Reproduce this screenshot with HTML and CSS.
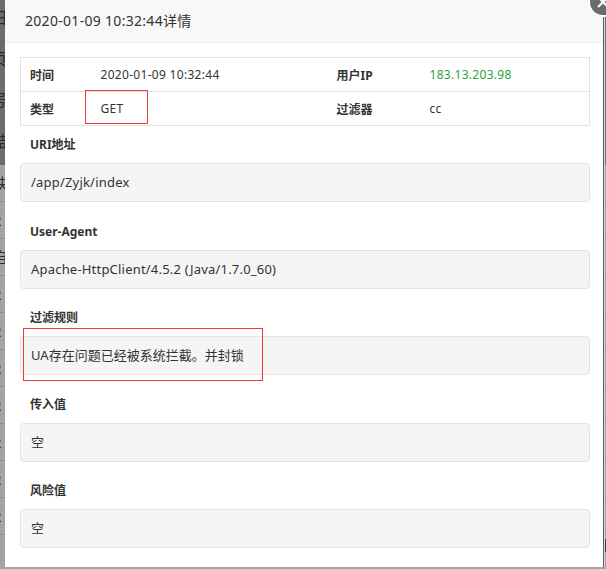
FILE: index.html
```html
<!DOCTYPE html>
<html lang="zh-CN">
<head>
<meta charset="utf-8">
<title>详情</title>
<link rel="stylesheet" href="styles.css">
</head>
<body>
<div class="page">
  <div class="page-top">
    <div class="prow">旧</div>
    <div class="prow">页</div>
    <div class="prow">号</div>
    <div class="prow">黠</div>
  </div>
  <div class="page-list">
    <div class="lrow">块</div>
    <div class="lrow">2</div>
    <div class="lrow">自</div>
    <div class="lrow">2</div>
    <div class="lrow">2</div>
    <div class="lrow">2</div>
    <div class="lrow">2</div>
    <div class="lrow">2</div>
    <div class="lrow">2</div>
    <div class="lrow">2</div>
    <div class="lrow last">2&nbsp;&nbsp;&nbsp;&nbsp;&nbsp;&nbsp;█████████&nbsp;&nbsp;&nbsp;&nbsp;&nbsp;&nbsp;&nbsp;&nbsp;&nbsp;&nbsp;████████████&nbsp;&nbsp;&nbsp;&nbsp;&nbsp;&nbsp;&nbsp;&nbsp;&nbsp;&nbsp;███&nbsp;&nbsp;&nbsp;&nbsp;&nbsp;&nbsp;&nbsp;&nbsp;&nbsp;&nbsp;&nbsp;&nbsp;&nbsp;&nbsp;&nbsp;████████████████████████</div>
  </div>
</div>

<div class="layer">
  <div class="layer-title">2020-01-09 10:32:44详情</div>
  <div class="layer-body">
    <table class="info">
      <colgroup>
        <col class="c1"><col class="c2"><col class="c3"><col class="c4">
      </colgroup>
      <tr>
        <th class="first">时间</th>
        <td>2020-01-09 10:32:44</td>
        <th>用户IP</th>
        <td class="ip">183.13.203.98</td>
      </tr>
      <tr>
        <th class="first">类型</th>
        <td>GET</td>
        <th>过滤器</th>
        <td>cc</td>
      </tr>
    </table>

    <div class="field first-field">
      <div class="label">URI地址</div>
      <div class="value latin">/app/Zyjk/index</div>
    </div>
    <div class="field">
      <div class="label">User-Agent</div>
      <div class="value latin">Apache-HttpClient/4.5.2 (Java/1.7.0_60)</div>
    </div>
    <div class="field">
      <div class="label">过滤规则</div>
      <div class="value">UA存在问题已经被系统拦截。并封锁</div>
    </div>
    <div class="field">
      <div class="label">传入值</div>
      <div class="value">空</div>
    </div>
    <div class="field">
      <div class="label">风险值</div>
      <div class="value">空</div>
    </div>
  </div>
  <span class="close"></span>
</div>

<div class="mark mark-get"></div>
<div class="mark mark-rule"></div>
</body>
</html>
```
FILE: styles.css
```css
html, body {
  margin: 0;
  padding: 0;
}
body {
  width: 606px;
  height: 569px;
  overflow: hidden;
  position: relative;
  background: #a6a6a6;
  font-family: "Noto Sans", "Noto Sans CJK SC", sans-serif;
  color: #333;
}

/* background page seen through the shade */
.page {
  width: 606px;
}
.page-top {
  background: #6d6d6d;
  height: 165px;
  padding-top: 8px;
  box-sizing: border-box;
}
.prow {
  height: 41px;
  font-size: 16px;
  line-height: 20px;
  color: #2a2a2a;
  margin-left: -9px;
}
.page-list {
  background: #a3a3a3;
}
.lrow {
  height: 36px;
  line-height: 36px;
  font-size: 15px;
  color: #2e2e2e;
  margin-left: -7px;
  border-bottom: 1px solid #8c8c8c;
  white-space: nowrap;
}
.lrow.last {
  line-height: 20px;
  height: 40px;
  font-size: 13px;
  color: #3a3a3a;
}

/* dialog */
.layer {
  position: absolute;
  left: 5px;
  top: 0;
  width: 598px;
  height: 567px;
  background: #fff;
  box-shadow: 1px 0 0 #5c5c5c, 2px 0 0 #d8d8d8;
}
.layer-title {
  height: 42px;
  line-height: 42px;
  padding-left: 20px;
  font-size: 14px;
  letter-spacing: 0.3px;
  color: #333;
  background: #f8f8f8;
  border-bottom: 1px solid #eee;
}
.layer-body {
  padding: 14px 13px 0 15px;
}

.info {
  width: 570px;
  border-collapse: collapse;
  border: 1px solid #e2e2e2;
  font-size: 12px;
}
.c1 { width: 65px; }
.c2 { width: 236px; }
.c3 { width: 93px; }
.info th,
.info td {
  height: 33px;
  padding: 0 0 0 15px;
  text-align: left;
  border-top: 1px solid #e2e2e2;
  color: #333;
}
.info td {
  letter-spacing: 0.3px;
}
.info th {
  font-weight: bold;
}
.info th.first {
  padding-left: 9px;
}
.info td.ip {
  color: #2aa43c;
}

.field {
  margin-top: 19.5px;
}
.field.first-field {
  margin-top: 9px;
}
.label {
  height: 20px;
  line-height: 20px;
  padding-left: 10px;
  font-size: 12px;
  font-weight: bold;
  color: #333;
  margin-bottom: 8px;
}
.value {
  box-sizing: border-box;
  height: 39px;
  line-height: 37px;
  padding: 0 10px;
  font-size: 13px;
  color: #333;
  background: #f5f5f5;
  border: 1px solid #e3e3e3;
  border-radius: 4px;
}
.value.latin {
  letter-spacing: 0.2px;
}

/* close button */
.close {
  position: absolute;
  left: 583px;
  top: -13px;
  width: 26px;
  height: 26px;
  border-radius: 50%;
  background: #6b6b6b;
  border: 2px solid #fff;
}
.close::before,
.close::after {
  content: "";
  position: absolute;
  left: 6px;
  top: 12px;
  width: 14px;
  height: 2px;
  background: #fff;
  transform: rotate(45deg);
}
.close::after {
  transform: rotate(-45deg);
}

/* red annotation boxes */
.mark {
  position: absolute;
  border: 1px solid #f03a3a;
}
.mark-get {
  left: 85px;
  top: 90px;
  width: 61px;
  height: 32px;
}
.mark-rule {
  left: 23px;
  top: 328px;
  width: 238px;
  height: 51px;
}
```
